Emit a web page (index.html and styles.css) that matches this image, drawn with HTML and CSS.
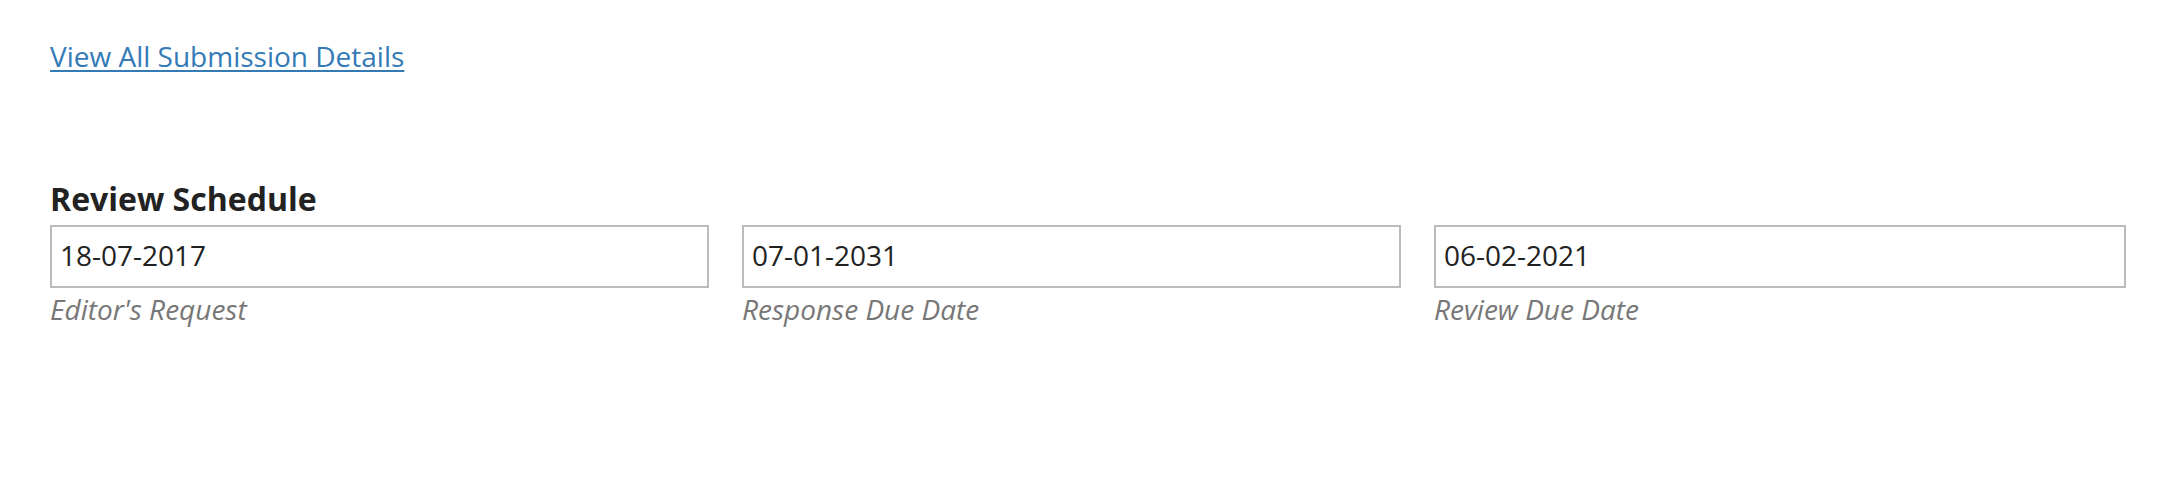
FILE: index.html
```html
<!DOCTYPE html>
<html lang="en">
<head>
<meta charset="utf-8">
<title>Review</title>
<link rel="stylesheet" href="styles.css">
</head>
<body>
<div class="page">
  <div class="details-link-row">
    <a class="details-link" href="#">View All Submission Details</a>
  </div>
  <section class="schedule">
    <h3 class="schedule-title">Review Schedule</h3>
    <div class="schedule-grid">
      <div class="field">
        <input class="field-input" type="text" value="18-07-2017" readonly>
        <span class="field-label">Editor's Request</span>
      </div>
      <div class="field">
        <input class="field-input" type="text" value="07-01-2031" readonly>
        <span class="field-label">Response Due Date</span>
      </div>
      <div class="field">
        <input class="field-input" type="text" value="06-02-2021" readonly>
        <span class="field-label">Review Due Date</span>
      </div>
    </div>
  </section>
</div>
</body>
</html>
```

FILE: styles.css
```css
html, body {
  margin: 0;
  padding: 0;
  background: #fff;
}

body {
  font-family: "Open Sans", "Noto Sans", sans-serif;
  font-size: 28px;
  line-height: 40px;
  color: #222;
}

.page {
  padding: 36px 50px 0 50px;
}

.details-link-row {
  height: 40px;
}

.details-link {
  color: #337ab7;
  text-decoration: underline;
  text-underline-offset: 3px;
  text-decoration-thickness: 2px;
}

.schedule {
  margin-top: 103px;
}

.schedule-title {
  margin: 0 0 6px 0;
  font-size: 32px;
  font-weight: 700;
  line-height: 40px;
  color: #222;
}

.schedule-grid {
  display: grid;
  grid-template-columns: 659px 659px 692px;
  column-gap: 33px;
}

.field {
  display: flex;
  flex-direction: column;
}

.field-input {
  box-sizing: border-box;
  width: 100%;
  height: 63px;
  margin: 0;
  padding: 0 8px 4px 8px;
  border: 2px solid #bbb;
  border-radius: 0;
  background: #fff;
  font-family: "Open Sans", "Noto Sans", sans-serif;
  font-size: 28px;
  line-height: 40px;
  color: #222;
  outline: none;
}

.field-label {
  margin-top: 1px;
  font-style: italic;
  font-size: 28px;
  line-height: 40px;
  color: #777;
}
```
